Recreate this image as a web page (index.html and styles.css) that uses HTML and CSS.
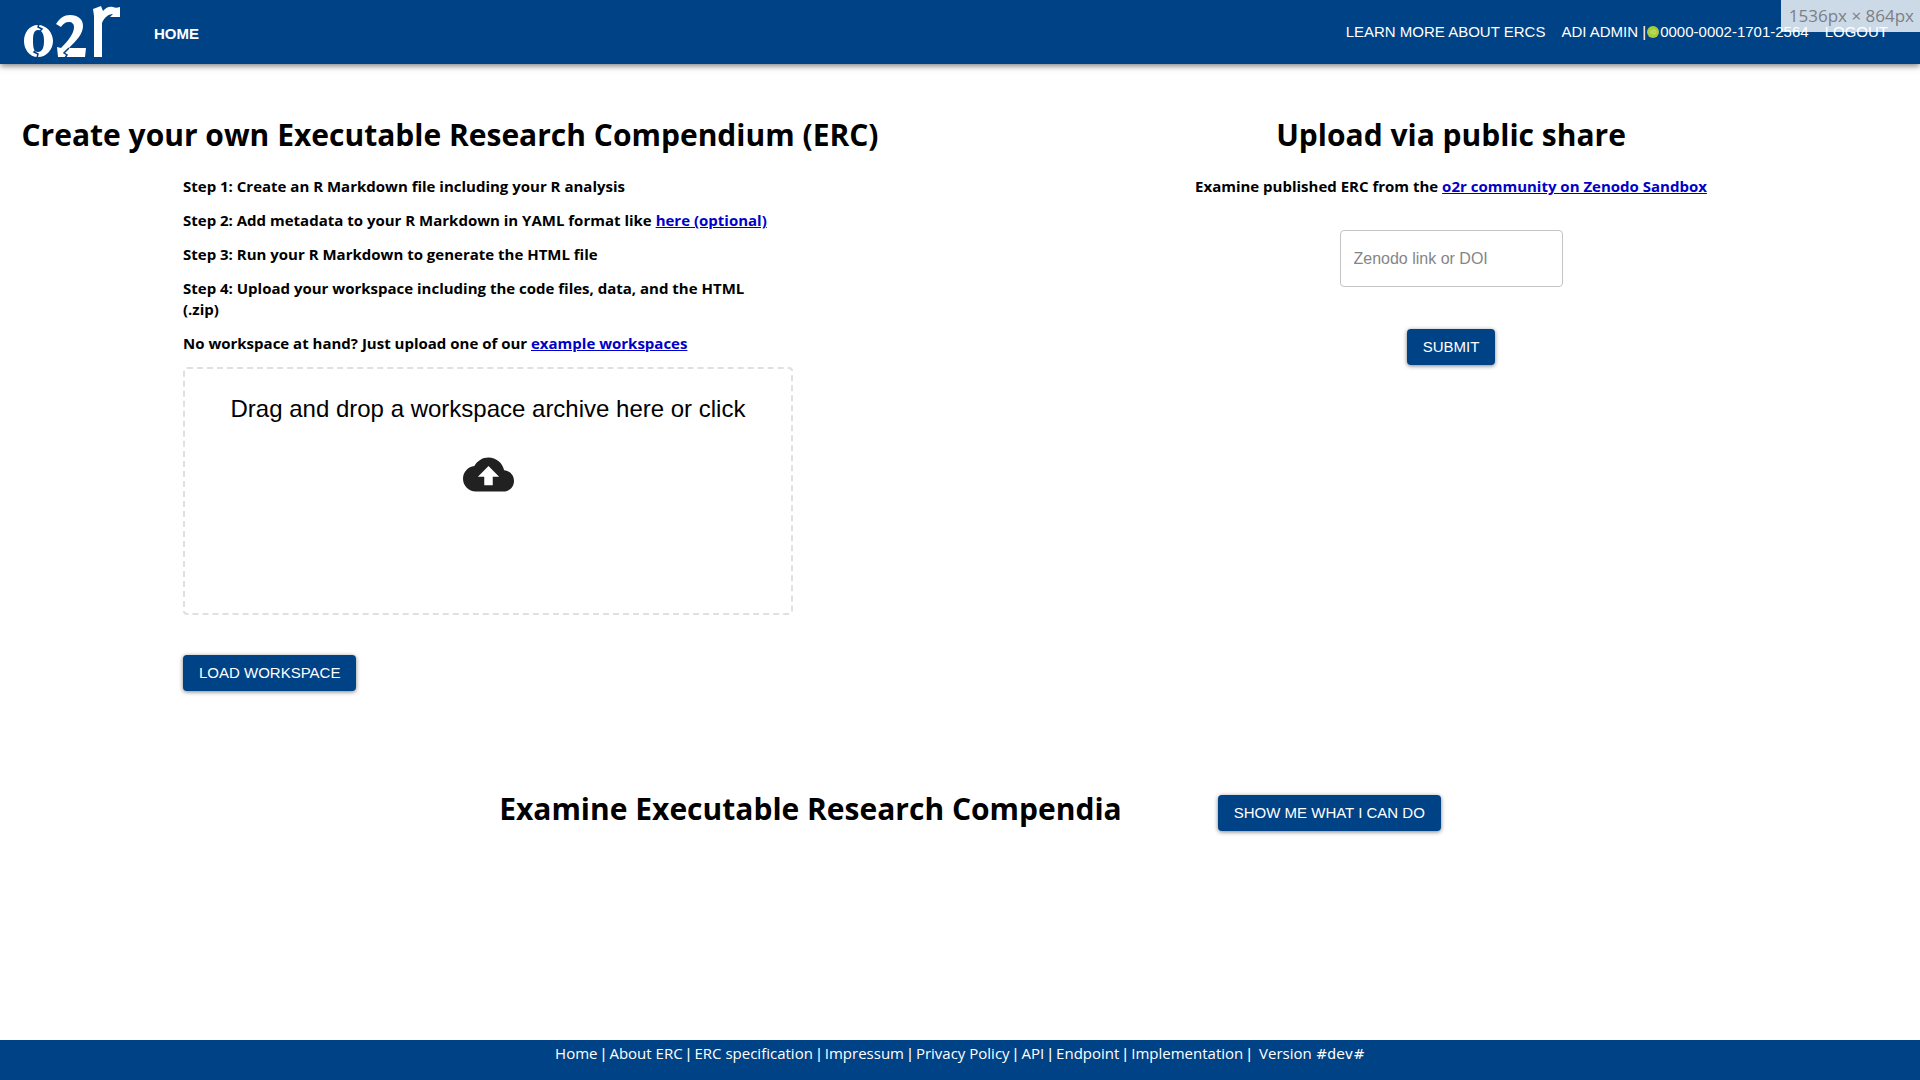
FILE: index.html
```html
<!DOCTYPE html>
<html lang="en">
<head>
<meta charset="utf-8">
<title>o2r</title>
<link rel="stylesheet" href="styles.css">
</head>
<body>
<header class="topbar">
  <a class="logo" href="#" aria-label="o2r home">
    <svg width="96" height="56" viewBox="0 0 96 56" fill="#fff">
      <path fill-rule="evenodd" d="M14 21C5 21 0 29 0 37s5 16 14 16 15-8 15-16-6-16-15-16zM14 26c4 0 6 4 6 11s-2 11-6 11-5-4-5-11 1-11 5-11z"/>
      <path d="M15 20l-1 3 4 2-4 4M14 44l-4 4 4 2-1 4" fill="none" stroke="#004286" stroke-width="1.5"/>
      <path d="M32 20c4-6 8-9 14-9 8 0 13 4 13 11 0 8-7 15-14 22h17l-1 9H34l-1-10 4 1c8-8 13-15 13-21 0-3-2-5-5-5-4 0-6 2-8 5z"/>
      <path d="M45 44l-5 5 3 2-2 3" fill="none" stroke="#004286" stroke-width="1.5"/>
      <path d="M69 5l8-3 2 5c3-4 7-5 10-4 2 1 4 1 7 0v10h-10l3-3c-5 0-9 4-11 9v34h-8V12z"/>
    </svg>
  </a>
  <nav class="nav-main"><a class="nav-link nav-active" href="#">HOME</a></nav>
  <nav class="nav-user">
    <a class="nav-link" href="#">LEARN MORE ABOUT ERCS</a>
    <a class="nav-link" href="#">ADI ADMIN |<svg class="orcid" width="14" height="14" viewBox="0 0 14 14"><circle cx="7" cy="7" r="6" fill="#a6ce39"/><path d="M5 5v4M7 5v4h1a2 2 0 0 0 0-4z" fill="none" stroke="#c6e085"/></svg>0000-0002-1701-2564</a>
    <a class="nav-link" href="#">LOGOUT</a>
  </nav>
  <div class="size-badge">1536px × 864px</div>
</header>
<main class="page">
  <div class="columns">
    <section class="create">
      <h1 class="title">Create your own Executable Research Compendium (ERC)</h1>
      <div class="steps">
        <p class="step">Step 1: Create an R Markdown file including your R analysis</p>
        <p class="step">Step 2: Add metadata to your R Markdown in YAML format like <a href="#">here (optional)</a></p>
        <p class="step">Step 3: Run your R Markdown to generate the HTML file</p>
        <p class="step">Step 4: Upload your workspace including the code files, data, and the HTML (.zip)</p>
        <p class="step">No workspace at hand? Just upload one of our <a href="#">example workspaces</a></p>
        <button class="dropzone" type="button">
          <span>Drag and drop a workspace archive here or click</span>
          <svg width="51" height="51" viewBox="0 0 24 24" fill="#212121"><path d="M19.35 10.04C18.67 6.59 15.64 4 12 4 9.11 4 6.6 5.64 5.35 8.04 2.34 8.36 0 10.91 0 14c0 3.31 2.69 6 6 6h13c2.76 0 5-2.24 5-5 0-2.64-2.05-4.78-4.65-4.96zM14 13v4h-4v-4H7l5-5 5 5h-3z"/></svg>
        </button>
        <button class="btn" type="button">LOAD WORKSPACE</button>
      </div>
    </section>
    <section class="share">
      <h1 class="title">Upload via public share</h1>
      <p class="step">Examine published ERC from the <a href="#">o2r community on Zenodo Sandbox</a></p>
      <input class="doi" type="text" placeholder="Zenodo link or DOI" aria-label="Zenodo link or DOI">
      <button class="btn" type="button">SUBMIT</button>
    </section>
  </div>
  <section class="examine">
    <h1 class="title">Examine Executable Research Compendia</h1>
    <button class="btn" type="button">SHOW ME WHAT I CAN DO</button>
  </section>
</main>
<footer class="footer">
  <a href="#">Home</a><span class="bar">|</span><a href="#">About ERC</a><span class="bar">|</span><a href="#">ERC specification</a><span class="bar">|</span><a href="#">Impressum</a><span class="bar">|</span><a href="#">Privacy Policy</a><span class="bar">|</span><a href="#">API</a><span class="bar">|</span><a href="#">Endpoint</a><span class="bar">|</span><a href="#">Implementation</a><span class="bar">|</span>&nbsp;Version <span class="version">#dev#</span>
</footer>
</body>
</html>
```
FILE: styles.css
```css
* { box-sizing: border-box; }
body {
  margin: 0;
  min-height: 100vh;
  display: flex;
  flex-direction: column;
  font-family: "Open Sans", "Noto Sans", sans-serif;
  color: #000;
  background: #fff;
}
.topbar {
  position: relative;
  display: flex;
  align-items: center;
  height: 64px;
  padding: 0 32px 0 24px;
  background: #004286;
  box-shadow: 0 2px 6px rgba(0, 0, 0, 0.5);
  font-family: "Liberation Sans", Arial, sans-serif;
}
.logo { display: flex; }
.nav-main { flex: 1; padding: 3px 0 0 34px; }
.nav-user { display: flex; gap: 16px; }
.nav-link {
  display: flex;
  align-items: center;
  color: #fff;
  font-size: 15px;
  line-height: 24px;
  text-decoration: none;
  white-space: nowrap;
}
.nav-active { font-weight: bold; }
.size-badge {
  position: absolute;
  top: 0;
  right: 0;
  padding: 0 6px 0 8px;
  background: rgba(255, 255, 255, 0.8);
  color: #7c8086;
  font: 17px/32px "Open Sans", "Noto Sans", sans-serif;
}
.page { flex: 1; }
.columns {
  display: grid;
  grid-template-columns: 900fr 1020fr;
  padding-top: 49px;
}
.title {
  margin: 0;
  font-size: 30px;
  line-height: 44px;
  font-weight: 700;
  text-align: center;
  white-space: nowrap;
}
.create { display: flex; flex-direction: column; }
.steps {
  width: 610px;
  margin: 19px 0 0 183px;
}
.step {
  margin: 0 0 13px;
  font-size: 15px;
  line-height: 21px;
  font-weight: 700;
}
.steps .step { padding-right: 20px; }
.step a { color: #0000c8; }
.dropzone {
  display: flex;
  flex-direction: column;
  align-items: center;
  gap: 24px;
  width: 100%;
  height: 248px;
  padding: 24px 0 0;
  border: 2px dashed #e0e0e0;
  border-radius: 4px;
  background: #fff;
  color: #000;
  font: 24px/32px "Liberation Sans", Arial, sans-serif;
}
.btn {
  height: 36px;
  padding: 0 16px;
  border: 0;
  border-radius: 4px;
  background: #004286;
  color: #fff;
  font: 15px/36px "Liberation Sans", Arial, sans-serif;
  box-shadow: 0 1px 4px rgba(0, 0, 0, 0.5);
}
.steps .btn { margin-top: 40px; }
.share {
  display: flex;
  flex-direction: column;
  align-items: center;
  padding-left: 82px;
}
.share .step { margin: 19px 0 33px; }
.doi {
  width: 223px;
  height: 57px;
  padding: 0 13px;
  border: 1px solid #c4c4c4;
  border-radius: 4px;
  font: 16px/24px "Liberation Sans", Arial, sans-serif;
}
.doi::placeholder { color: #858585; opacity: 1; }
.share .btn { margin-top: 42px; }
.examine {
  display: flex;
  align-items: flex-end;
  justify-content: center;
  gap: 96px;
  padding: 96px 0 32px 20px;
}
.footer {
  height: 40px;
  background: #004286;
  color: #fff;
  font-size: 15px;
  line-height: 26px;
  text-align: center;
}
.footer a { color: #fff; text-decoration: none; }
.bar { padding: 0 4px; font-family: "Liberation Sans", Arial, sans-serif; }
.version { font-family: "DejaVu Sans", sans-serif; font-size: 14px; }
```
